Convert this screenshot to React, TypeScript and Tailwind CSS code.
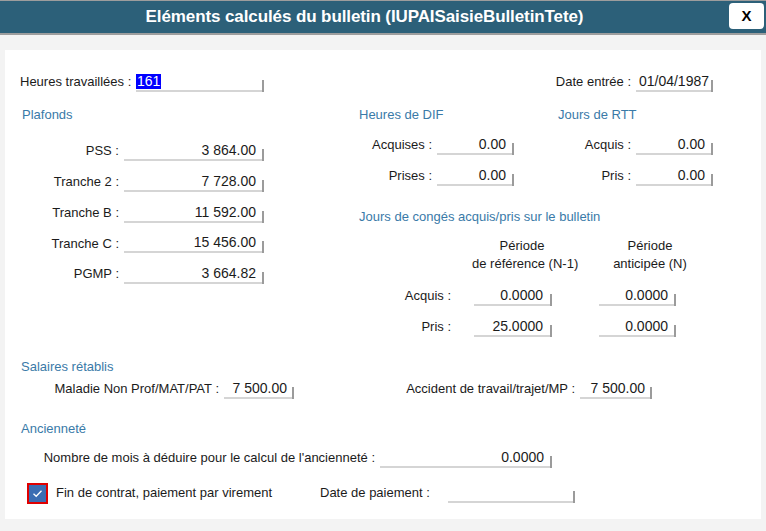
import React from "react";

type FieldProps = {
  value?: React.ReactNode;
  w: string;
  left?: boolean;
  pr?: string;
};

// Read-only WinForms-style value box: sunken underline with a small tick on the right.
function Field({ value, w, left, pr = "pr-[5px]" }: FieldProps) {
  return (
    <div className={`flex h-[20px] shrink-0 ${w}`}>
      <div
        className={`flex-1 border-b-2 border-[#d5d5d5] text-[14px] leading-[19px] whitespace-nowrap ${
          left ? "text-left" : `text-right ${pr}`
        }`}
      >
        {value}
      </div>
      <div className="w-[2px] h-[12px] self-end bg-[#9b9b9b]" />
    </div>
  );
}

function GroupTitle({ children, className = "" }: { children: React.ReactNode; className?: string }) {
  return <div className={`text-[#3a7aa8] leading-[14px] whitespace-nowrap ${className}`}>{children}</div>;
}

function Row({
  label,
  labelW,
  gap = "ml-[5px]",
  children,
}: {
  label: string;
  labelW: string;
  gap?: string;
  children: React.ReactNode;
}) {
  return (
    <div className="flex items-center h-[20px]">
      <div className={`${labelW} text-right whitespace-nowrap shrink-0`}>{label}</div>
      <div className={gap}>{children}</div>
    </div>
  );
}

export default function App() {
  const plafonds: [string, string][] = [
    ["PSS :", "3 864.00"],
    ["Tranche 2 :", "7 728.00"],
    ["Tranche B :", "11 592.00"],
    ["Tranche C :", "15 456.00"],
    ["PGMP :", "3 664.82"],
  ];

  return (
    <div className="w-[766px] h-[531px] overflow-hidden bg-[#f3f3f3] font-['Liberation_Sans',Arial,sans-serif] text-[13px] text-[#1b1b1b]">
      {/* Title bar */}
      <div className="h-[35px] border-t border-b-2 border-[#9d9d9d] bg-[#2c6079] flex items-start">
        <div className="flex-1 h-[32px] flex items-center justify-center text-white font-bold text-[17px] tracking-[-0.1px]">
          Eléments calculés du bulletin (IUPAISaisieBulletinTete)
        </div>
        <button className="mt-[2px] mr-[2px] w-[35px] h-[26px] bg-white rounded-[4px] flex items-center justify-center font-bold text-[15px] text-black">
          X
        </button>
      </div>

      {/* Content panel */}
      <div className="pt-[15px] pl-[5px]">
        <div className="w-[756px] h-[469px] bg-white pt-[22px]">
          {/* Heures travaillées / Date entrée */}
          <div className="flex items-center h-[20px]">
            <div className="pl-[15px] w-[131px] whitespace-nowrap shrink-0">Heures travaillées :</div>
            <Field
              w="w-[128px]"
              left
              value={<span className="inline-block bg-[#0000ff] text-white leading-[15px] px-[1px]">161</span>}
            />
            <div className="ml-auto flex items-center">
              <div className="whitespace-nowrap mr-[5px]">Date entrée :</div>
              <Field w="w-[77px]" pr="pr-[2px]" value="01/04/1987" />
            </div>
            <div className="w-[48px] shrink-0" />
          </div>

          <div className="flex mt-[16px]">
            {/* Plafonds */}
            <div className="w-[354px] shrink-0">
              <GroupTitle className="pl-[17px]">Plafonds</GroupTitle>
              <div className="mt-[19px] flex flex-col gap-[10.75px]">
                {plafonds.map(([l, v]) => (
                  <Row key={l} label={l} labelW="w-[114px]" gap="ml-[5px]">
                    <Field w="w-[140px]" pr="pr-[6px]" value={v} />
                  </Row>
                ))}
              </div>
            </div>

            {/* Right column */}
            <div className="flex-1">
              <div className="flex">
                <div className="w-[199px] shrink-0">
                  <GroupTitle>Heures de DIF</GroupTitle>
                  <div className="mt-[13px] flex flex-col gap-[11px]">
                    <Row label="Acquises :" labelW="w-[73px]" gap="ml-[5px]">
                      <Field w="w-[77px]" pr="pr-[6px]" value="0.00" />
                    </Row>
                    <Row label="Prises :" labelW="w-[73px]" gap="ml-[5px]">
                      <Field w="w-[77px]" pr="pr-[6px]" value="0.00" />
                    </Row>
                  </div>
                </div>
                <div className="flex-1">
                  <GroupTitle>Jours de RTT</GroupTitle>
                  <div className="mt-[13px] flex flex-col gap-[11px]">
                    <Row label="Acquis :" labelW="w-[73px]" gap="ml-[5px]">
                      <Field w="w-[77px]" pr="pr-[6px]" value="0.00" />
                    </Row>
                    <Row label="Pris :" labelW="w-[73px]" gap="ml-[5px]">
                      <Field w="w-[77px]" pr="pr-[6px]" value="0.00" />
                    </Row>
                  </div>
                </div>
              </div>

              <GroupTitle className="mt-[24px]">Jours de congés acquis/pris sur le bulletin</GroupTitle>

              {/* Column headers */}
              <div className="flex mt-[13px] leading-[18px]">
                <div className="w-[113px] shrink-0" />
                <div className="w-[100px] text-center whitespace-nowrap">
                  Période
                  <br />
                  de référence (N-1)
                </div>
                <div className="w-[28px] shrink-0" />
                <div className="w-[100px] text-center whitespace-nowrap">
                  Période
                  <br />
                  anticipée (N)
                </div>
              </div>

              <div className="mt-[13px] flex flex-col gap-[11px]">
                <Row label="Acquis :" labelW="w-[92px]" gap="ml-[23px]">
                  <div className="flex">
                    <Field w="w-[78px]" pr="pr-[7px]" value="0.0000" />
                    <div className="w-[47px]" />
                    <Field w="w-[77px]" pr="pr-[6px]" value="0.0000" />
                  </div>
                </Row>
                <Row label="Pris :" labelW="w-[92px]" gap="ml-[23px]">
                  <div className="flex">
                    <Field w="w-[78px]" pr="pr-[7px]" value="25.0000" />
                    <div className="w-[47px]" />
                    <Field w="w-[77px]" pr="pr-[6px]" value="0.0000" />
                  </div>
                </Row>
              </div>
            </div>
          </div>

          {/* Salaires rétablis */}
          <GroupTitle className="pl-[16px] mt-[23px]">Salaires rétablis</GroupTitle>
          <div className="flex items-center h-[20px] mt-[5px] pl-[33px]">
            <div className="w-[181px] text-right whitespace-nowrap shrink-0">Maladie Non Prof/MAT/PAT :</div>
            <div className="ml-[5px]">
              <Field w="w-[70px]" pr="pr-[5px]" value="7 500.00" />
            </div>
            <div className="w-[281px] text-right whitespace-nowrap shrink-0">Accident de travail/trajet/MP :</div>
            <div className="ml-[5px]">
              <Field w="w-[72px]" pr="pr-[5px]" value="7 500.00" />
            </div>
          </div>

          {/* Ancienneté */}
          <GroupTitle className="pl-[16px] mt-[23px]">Ancienneté</GroupTitle>
          <div className="flex items-center h-[20px] mt-[12px] pl-[20px]">
            <div className="w-[350px] text-right whitespace-nowrap shrink-0">
              Nombre de mois à déduire pour le calcul de l'ancienneté :
            </div>
            <div className="ml-[5px]">
              <Field w="w-[172px]" pr="pr-[6px]" value="0.0000" />
            </div>
          </div>

          {/* Fin de contrat */}
          <div className="flex items-center h-[22px] mt-[14px] pl-[22px]">
            <div className="w-[21px] h-[21px] border-2 border-[#e00000] bg-[#3b6db3] flex items-center justify-center shrink-0">
              <svg width="11" height="9" viewBox="0 0 11 9" fill="none">
                <path d="M1.5 4.8 L4.2 7.3 L9.5 1.8" stroke="#ffffff" strokeWidth="1.3" />
              </svg>
            </div>
            <div className="ml-[8px] w-[264px] whitespace-nowrap shrink-0">Fin de contrat, paiement par virement</div>
            <div className="w-[128px] whitespace-nowrap shrink-0">Date de paiement :</div>
            <Field w="w-[127px]" value="" />
          </div>
        </div>
      </div>
    </div>
  );
}
